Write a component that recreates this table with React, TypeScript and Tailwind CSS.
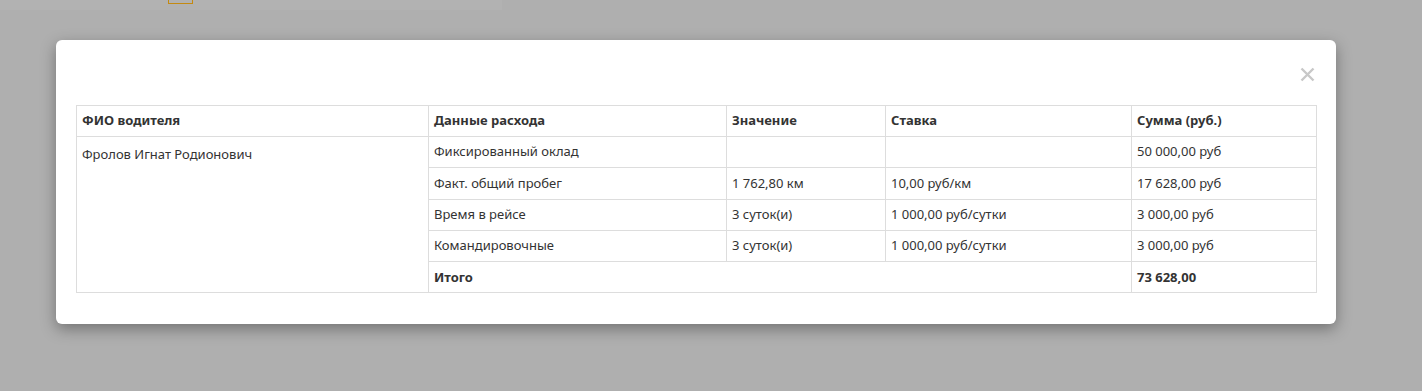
import React from "react"

const rows = [
  { name: "Фиксированный оклад", value: "", rate: "", sum: "50 000,00 руб" },
  { name: "Факт. общий пробег", value: "1 762,80 км", rate: "10,00 руб/км", sum: "17 628,00 руб" },
  { name: "Время в рейсе", value: "3 суток(и)", rate: "1 000,00 руб/сутки", sum: "3 000,00 руб" },
  { name: "Командировочные", value: "3 суток(и)", rate: "1 000,00 руб/сутки", sum: "3 000,00 руб" },
]

const td = "border border-[#dddddd] px-[5px] h-[31.3px] py-0 align-middle"

export default function App() {
  return (
    <div className="min-h-[391px] w-full bg-[#afafaf] text-[13px] text-[#333333]" style={{ fontFamily: '"Noto Sans", "Open Sans", sans-serif' }}>
      <div className="w-[502px] h-[10px] bg-[#b2b2b2] relative">
        <div className="absolute left-[168px] top-[-2px] w-[25px] h-[6px] border border-[#c48a12]" />
      </div>
      <div className="ml-[56px] mt-[30px] w-[1280px] bg-white rounded-[6px] shadow-[0_5px_15px_rgba(0,0,0,0.35)] px-[20px] pb-[31px]">
        <div className="h-[65px] flex items-start justify-end pt-[27px] pr-[1px]">
          <svg width="15" height="15" viewBox="0 0 15 15" className="text-[#c8c8c8]">
            <path d="M1.5 1.5 L13.5 13.5 M13.5 1.5 L1.5 13.5" stroke="currentColor" strokeWidth="2.4" />
          </svg>
        </div>
        <table className="w-[1240px] border-collapse table-fixed">
          <colgroup>
            <col className="w-[352px]" />
            <col className="w-[298px]" />
            <col className="w-[159px]" />
            <col className="w-[246px]" />
            <col className="w-[185px]" />
          </colgroup>
          <thead>
            <tr className="font-bold text-left">
              <th className={`${td} h-[31px]`}>ФИО водителя</th>
              <th className={`${td} h-[31px]`}>Данные расхода</th>
              <th className={`${td} h-[31px]`}>Значение</th>
              <th className={`${td} h-[31px]`}>Ставка</th>
              <th className={`${td} h-[31px]`}>Сумма (руб.)</th>
            </tr>
          </thead>
          <tbody>
            {rows.map((r, i) => (
              <tr key={r.name}>
                {i === 0 && <td rowSpan={5} className={`${td} align-top pt-[8px]`}>Фролов Игнат Родионович</td>}
                <td className={td}>{r.name}</td>
                <td className={td}>{r.value}</td>
                <td className={td}>{r.rate}</td>
                <td className={td}>{r.sum}</td>
              </tr>
            ))}
            <tr className="font-bold">
              <td colSpan={3} className={td}>Итого</td>
              <td className={td}>73 628,00</td>
            </tr>
          </tbody>
        </table>
      </div>
    </div>
  )
}
